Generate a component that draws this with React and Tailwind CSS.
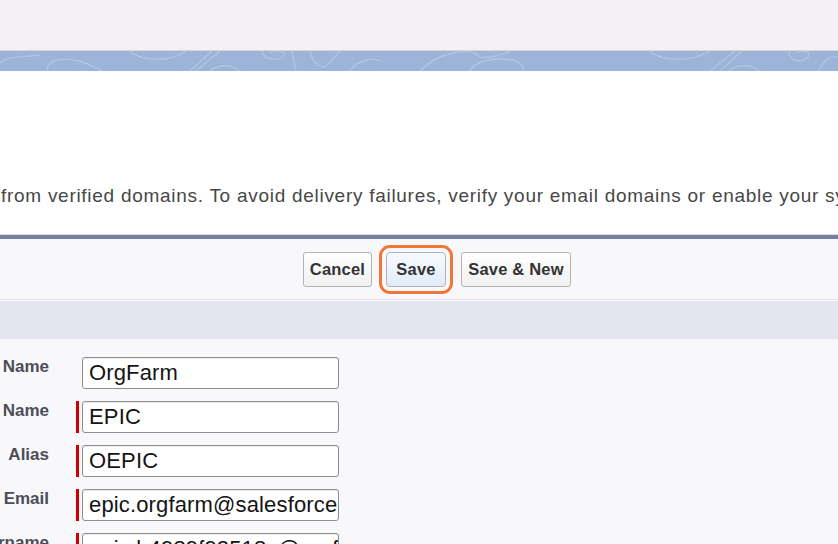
import React from 'react'

const fields = [
  { label: 'First Name', value: 'OrgFarm', required: false },
  { label: 'Last Name', value: 'EPIC', required: true },
  { label: 'Alias', value: 'OEPIC', required: true },
  { label: 'Email', value: 'epic.orgfarm@salesforce.com', required: true },
  { label: 'Username', value: 'epic.b4989f92518c@orgfarm.epic', required: true },
]

// faint contour lines on the header band
const BandPattern = () => (
  <svg className="absolute inset-0" width="838" height="20" viewBox="0 0 838 20" fill="none">
    <g stroke="#ffffff" strokeOpacity="0.22" strokeWidth="1.4">
      <path d="M0 12 C10 4 30 6 40 4" />
      <path d="M48 20 C44 10 60 6 80 10 C92 14 98 18 102 20" />
      <path d="M130 0 C140 10 170 12 186 0" />
      <path d="M190 20 L212 0 M196 20 L220 0 M210 20 C220 12 232 14 240 20" />
      <path d="M262 0 C262 8 280 12 284 4 C286 0 274 -2 270 2" />
      <path d="M292 0 L296 20" />
      <path d="M310 0 C312 10 318 16 324 16 C330 14 334 6 340 0" />
      <path d="M350 20 C356 10 372 6 380 10" />
      <path d="M420 20 C440 0 470 -4 480 6 C490 8 500 4 510 0" />
      <path d="M470 20 C474 12 486 8 500 8 C520 8 522 14 524 20" />
      <path d="M650 0 C660 10 690 12 710 0" />
      <path d="M710 20 L735 0 M720 20 L742 0 M728 20 C740 12 752 14 760 20" />
      <path d="M790 0 C786 8 800 14 808 6 C812 0 800 -2 796 2" />
      <path d="M818 20 C824 10 830 4 838 6" />
    </g>
  </svg>
)

const Button = ({ children, focused, width }) => (
  <button
    className={
      'h-[35px] shrink-0 rounded-[3px] border border-[#b3b3b6] text-[16.5px] font-bold text-[#333] tracking-[0.2px] ' +
      width +
      (focused
        ? ' bg-gradient-to-b from-[#f6fafe] to-[#e1ecf9] outline-[3.5px] outline-solid outline-[#f27636] outline-offset-[4px] rounded-[4px]'
        : ' bg-gradient-to-b from-[#ffffff] to-[#f0f0f1]')
    }
  >
    {children}
  </button>
)

export default function App() {
  return (
    <div className="w-[838px] h-[544px] overflow-hidden bg-[#f8f7fa] font-['Liberation_Sans',Arial,sans-serif]">
      <div className="h-[51px] bg-[#f3f1f4] border-b border-[#d8d4d6]" />
      <div className="relative h-[20px] bg-[#9cb4d8] overflow-hidden">
        <BandPattern />
      </div>

      <div className="h-[163px] bg-white pt-[114px] pl-[1px] whitespace-nowrap overflow-hidden text-[19px] leading-[22px] tracking-[0.72px] text-[#474747]">
        from verified domains. To avoid delivery failures, verify your email domains or enable your system email address
      </div>
      <div className="h-px bg-[#dcdce3]" />
      <div className="h-[4px] bg-[#7a7f9f]" />

      <div className="h-[60px] flex items-center pl-[303px]">
        <Button width="w-[69px]">Cancel</Button>
        <div className="w-[14px] shrink-0" />
        <Button focused width="w-[60px]">Save</Button>
        <div className="w-[15px] shrink-0" />
        <Button width="w-[110px]">Save &amp; New</Button>
      </div>

      <div className="h-[2px] border-t border-[#e4e1e6] bg-[#fbfafc]" />
      <div className="h-[38px] bg-[#e3e6ef]" />

      <div className="pt-[18px] flex flex-col">
        {fields.map((f) => (
          <div key={f.label} className="h-[44px] flex items-start">
            <div className="w-[49px] shrink-0 flex justify-end overflow-hidden whitespace-nowrap text-[17px] leading-[19px] font-bold text-[#4d4d59]">
              {f.label}
            </div>
            <div className="ml-[27px] w-[3px] h-[32px] shrink-0">
              {f.required && <div className="w-[3px] h-full bg-[#cc0000]" />}
            </div>
            <div className="ml-[3px] w-[257px] h-[32px] shrink-0 rounded-[3px] border border-[#8d8d8f] bg-white shadow-[inset_0_1px_1px_rgba(0,0,0,0.08)] overflow-hidden flex items-center pl-[6px]">
              <span className="whitespace-nowrap text-[22px] leading-[24px] tracking-[0.15px] text-[#141414]">{f.value}</span>
            </div>
          </div>
        ))}
      </div>
    </div>
  )
}
